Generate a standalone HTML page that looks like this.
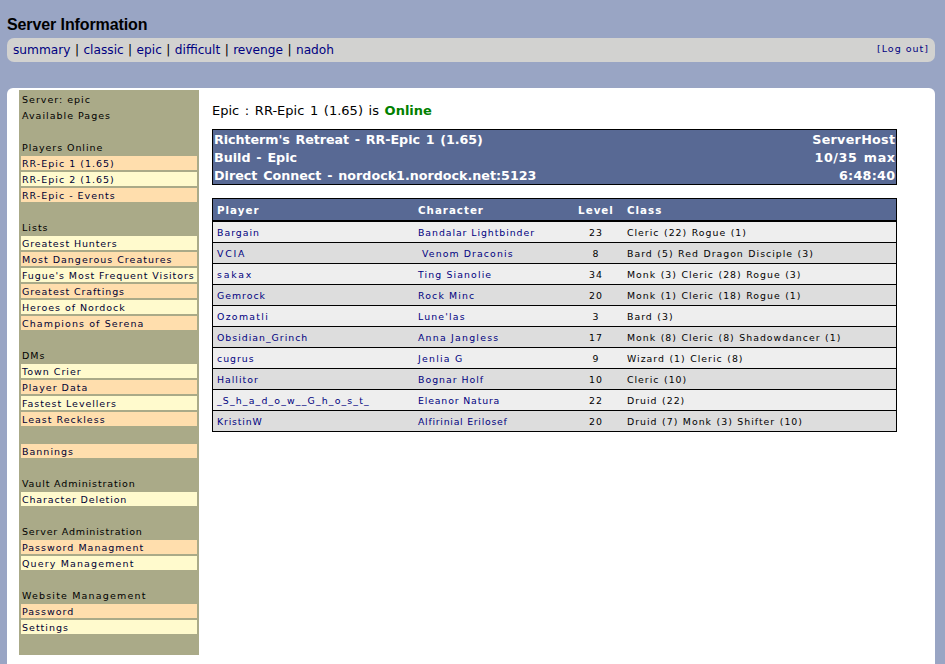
<!DOCTYPE html>
<html>
<head>
<meta charset="utf-8">
<title>Server Information</title>
<style>
html,body{margin:0;padding:0;}
body{background:#99a5c4;width:945px;height:664px;overflow:hidden;position:relative;font-family:"DejaVu Sans","Liberation Sans",sans-serif;color:#000;}
a{color:#000080;text-decoration:none;}
#title{position:absolute;left:7px;top:16px;letter-spacing:-0.1px;font-family:"Liberation Sans",sans-serif;font-weight:bold;font-size:16px;line-height:18px;white-space:nowrap;}
#nav{position:absolute;left:7px;top:38px;width:928px;height:24px;background:#d2d2d0;border-radius:7px;}
#nav .links{position:absolute;left:6px;top:4px;font-size:12.2px;word-spacing:0.5px;line-height:17px;white-space:nowrap;}
#nav .logout{position:absolute;right:6px;top:4px;font-size:9.5px;line-height:13px;letter-spacing:1px;white-space:nowrap;}
#main{position:absolute;left:7px;top:88px;width:928px;height:600px;background:#fff;border-radius:6px;}
#side{position:absolute;left:12px;top:2px;width:180px;height:565px;background:#aaaa88;font-size:9.5px;letter-spacing:1px;}
#side div{position:absolute;left:0;height:16px;line-height:16px;white-space:nowrap;padding-left:3px;}
#side a{position:absolute;left:2px;width:175px;height:14px;line-height:15px;padding-left:1px;color:#000033;white-space:nowrap;display:block;}
#side a.o{background:#ffdead;}
#side a.y{background:#fffacd;}
#status{position:absolute;left:205px;top:14px;font-size:13px;word-spacing:1.5px;line-height:17px;white-space:nowrap;}
#status b{color:#008000;}
#info{position:absolute;left:205px;top:41px;width:683px;height:54px;background:#586994;border:1px solid #000;color:#fff;font-weight:bold;font-size:12.7px;word-spacing:1.4px;}
#info div{position:absolute;left:1px;right:1px;height:18px;line-height:18px;white-space:nowrap;}
#info div span{position:absolute;right:0;top:0;}
#tbl{position:absolute;left:205px;top:110px;width:683px;border:1px solid #000;font-size:9.35px;letter-spacing:1px;}
#tbl .h{height:21px;background:#586994;color:#fff;font-weight:bold;font-size:10.3px;border-bottom:2px solid #000;position:relative;}
#tbl .r{height:20px;border-bottom:1px solid #000;position:relative;}
#tbl .r:last-child{border-bottom:none;}
#tbl .r.a{background:#eeeeee;}
#tbl .r.b{background:#dddddd;}
#tbl span{position:absolute;top:1px;line-height:20px;white-space:nowrap;}
#tbl .h span{line-height:21px;}
.c1{left:4px;}
.c2{left:205px;}
.c3{left:358px;width:50px;text-align:center;}
.c4{left:414px;word-spacing:0.6px;}
</style>
</head>
<body>
<div id="title">Server Information</div>
<div id="nav">
<div class="links"><a href="#">summary</a> | <a href="#">classic</a> | <a href="#">epic</a> | <a href="#">difficult</a> | <a href="#">revenge</a> | <a href="#">nadoh</a></div>
<div class="logout"><a href="#">[Log out]</a></div>
</div>
<div id="main">
<div id="side">
<div style="top:2px">Server: epic</div>
<div style="top:18px">Available Pages</div>
<div style="top:50px;letter-spacing:0.93px">Players Online</div>
<a class="o" style="top:66px" href="#">RR-Epic 1 (1.65)</a>
<a class="y" style="top:82px" href="#">RR-Epic 2 (1.65)</a>
<a class="o" style="top:98px" href="#">RR-Epic - Events</a>
<div style="top:130px">Lists</div>
<a class="y" style="top:146px;letter-spacing:0.88px" href="#">Greatest Hunters</a>
<a class="o" style="top:162px" href="#">Most Dangerous Creatures</a>
<a class="y" style="top:178px;letter-spacing:0.92px" href="#">Fugue's Most Frequent Visitors</a>
<a class="o" style="top:194px;letter-spacing:0.89px" href="#">Greatest Craftings</a>
<a class="y" style="top:210px;letter-spacing:0.94px" href="#">Heroes of Nordock</a>
<a class="o" style="top:226px;letter-spacing:1.1px" href="#">Champions of Serena</a>
<div style="top:258px">DMs</div>
<a class="y" style="top:274px" href="#">Town Crier</a>
<a class="o" style="top:290px" href="#">Player Data</a>
<a class="y" style="top:306px;letter-spacing:0.93px" href="#">Fastest Levellers</a>
<a class="o" style="top:322px" href="#">Least Reckless</a>
<a class="o" style="top:354px" href="#">Bannings</a>
<div style="top:386px;letter-spacing:0.85px">Vault Administration</div>
<a class="y" style="top:402px;letter-spacing:0.86px" href="#">Character Deletion</a>
<div style="top:434px;letter-spacing:0.81px">Server Administration</div>
<a class="o" style="top:450px" href="#">Password Managment</a>
<a class="y" style="top:466px;letter-spacing:1.13px" href="#">Query Management</a>
<div style="top:498px;letter-spacing:1.17px">Website Management</div>
<a class="o" style="top:514px" href="#">Password</a>
<a class="y" style="top:530px" href="#">Settings</a>
</div>
<div id="status">Epic : RR-Epic 1 (1.65) is <b>Online</b></div>
<div id="info">
<div style="top:1px;letter-spacing:-0.05px">Richterm's Retreat - RR-Epic 1 (1.65)<span style="letter-spacing:0.3px;right:-0.3px">ServerHost</span></div>
<div style="top:19px">Build - Epic<span style="letter-spacing:0.6px;right:-0.6px">10/35 max</span></div>
<div style="top:37px">Direct Connect - nordock1.nordock.net:5123<span style="letter-spacing:0.3px;right:-0.3px">6:48:40</span></div>
</div>
<div id="tbl">
<div class="h"><span class="c1">Player</span><span class="c2">Character</span><span class="c3">Level</span><span class="c4">Class</span></div>
<div class="r a"><span class="c1"><a href="#">Bargain</a></span><span class="c2"><a href="#" style="letter-spacing:0.94px">Bandalar Lightbinder</a></span><span class="c3">23</span><span class="c4">Cleric (22) Rogue (1)</span></div>
<div class="r b"><span class="c1"><a href="#" style="letter-spacing:1.75px">VCIA</a></span><span class="c2"><a href="#" style="letter-spacing:1.1px">&nbsp;Venom Draconis</a></span><span class="c3">8</span><span class="c4">Bard (5) Red Dragon Disciple (3)</span></div>
<div class="r a"><span class="c1"><a href="#" style="letter-spacing:1.8px">sakax</a></span><span class="c2"><a href="#" style="letter-spacing:1.12px">Ting Sianolie</a></span><span class="c3">34</span><span class="c4">Monk (3) Cleric (28) Rogue (3)</span></div>
<div class="r b"><span class="c1"><a href="#">Gemrock</a></span><span class="c2"><a href="#" style="letter-spacing:1.15px">Rock Minc</a></span><span class="c3">20</span><span class="c4">Monk (1) Cleric (18) Rogue (1)</span></div>
<div class="r a"><span class="c1"><a href="#" style="letter-spacing:1.3px">Ozomatli</a></span><span class="c2"><a href="#" style="letter-spacing:1.16px">Lune'las</a></span><span class="c3">3</span><span class="c4">Bard (3)</span></div>
<div class="r b"><span class="c1"><a href="#">Obsidian_Grinch</a></span><span class="c2"><a href="#" style="letter-spacing:1.23px">Anna Jangless</a></span><span class="c3">17</span><span class="c4">Monk (8) Cleric (8) Shadowdancer (1)</span></div>
<div class="r a"><span class="c1"><a href="#">cugrus</a></span><span class="c2"><a href="#" style="letter-spacing:1.25px">Jenlia G</a></span><span class="c3">9</span><span class="c4">Wizard (1) Cleric (8)</span></div>
<div class="r b"><span class="c1"><a href="#">Hallitor</a></span><span class="c2"><a href="#">Bognar Holf</a></span><span class="c3">10</span><span class="c4">Cleric (10)</span></div>
<div class="r a"><span class="c1"><a href="#" style="letter-spacing:1.16px">_S_h_a_d_o_w__G_h_o_s_t_</a></span><span class="c2"><a href="#" style="letter-spacing:0.85px">Eleanor Natura</a></span><span class="c3">22</span><span class="c4">Druid (22)</span></div>
<div class="r b"><span class="c1"><a href="#" style="letter-spacing:0.85px">KristinW</a></span><span class="c2"><a href="#" style="letter-spacing:0.73px">Alfirinial Erilosef</a></span><span class="c3">20</span><span class="c4">Druid (7) Monk (3) Shifter (10)</span></div>
</div>
</div>
</body>
</html>
